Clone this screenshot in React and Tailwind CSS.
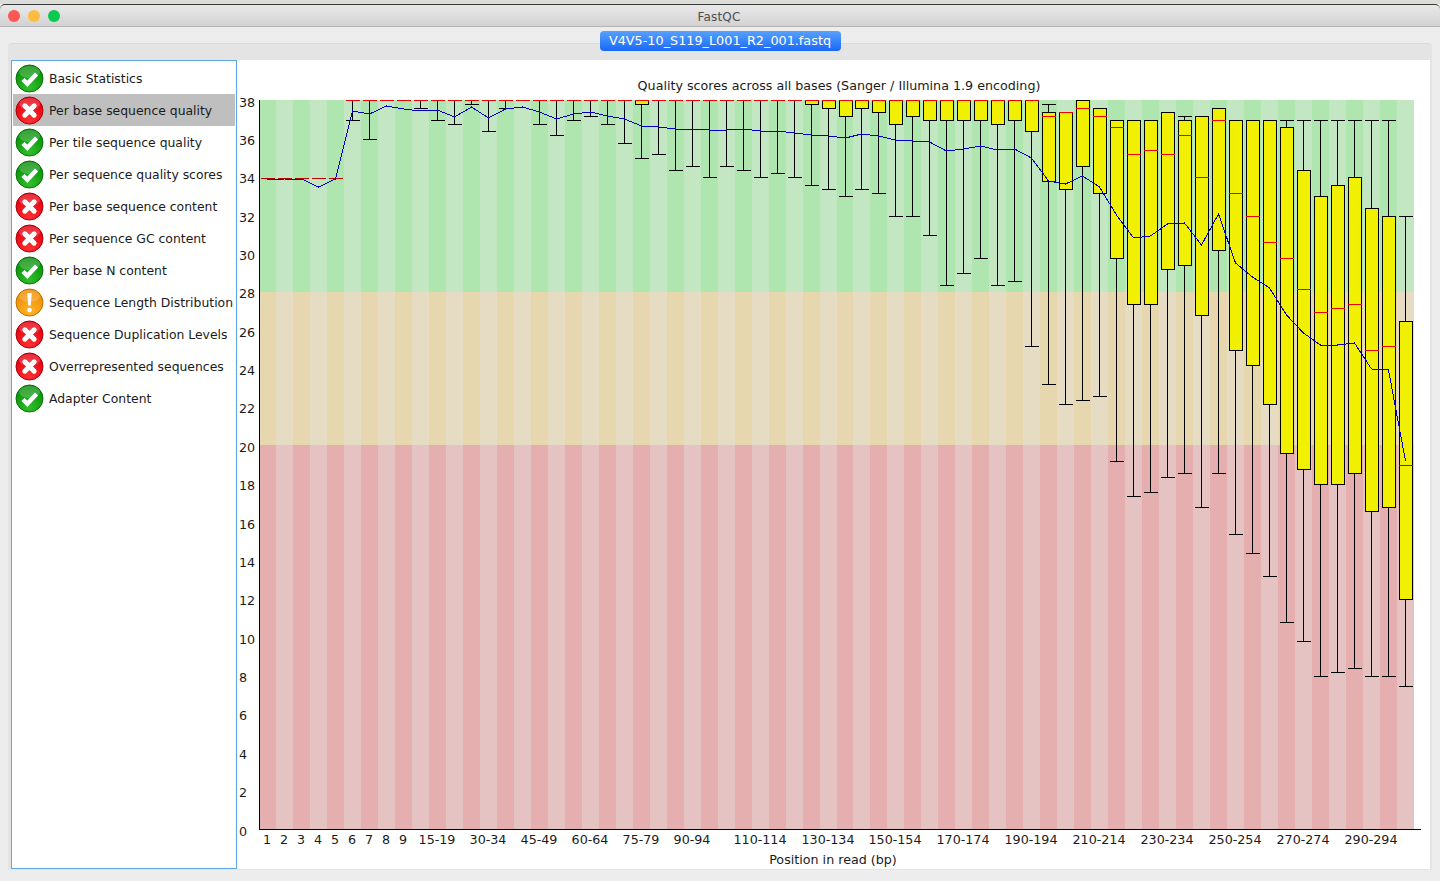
import React from "react";

const modules = [
  { name: "Basic Statistics", status: "ok" },
  { name: "Per base sequence quality", status: "fail", selected: true },
  { name: "Per tile sequence quality", status: "ok" },
  { name: "Per sequence quality scores", status: "ok" },
  { name: "Per base sequence content", status: "fail" },
  { name: "Per sequence GC content", status: "fail" },
  { name: "Per base N content", status: "ok" },
  { name: "Sequence Length Distribution", status: "warn" },
  { name: "Sequence Duplication Levels", status: "fail" },
  { name: "Overrepresented sequences", status: "fail" },
  { name: "Adapter Content", status: "ok" },
];

const PLOT_LEFT = 259;
const PLOT_RIGHT = 1414;
const PLOT_TOP = 100;
const PLOT_BOTTOM = 829;
const COL = (PLOT_RIGHT - PLOT_LEFT) / 68;

// pixel rows for each column: [top whisker, box top, median, box bottom, low whisker]
const flat = (low) => [100, 100, 100, 100, low];
const boxes = [
  [178, 178, 178, 178, 178],
  [178, 178, 178, 178, 178],
  [178, 178, 178, 178, 178],
  [178, 178, 178, 178, 178],
  [178, 178, 178, 178, 178],
  flat(120), flat(139), flat(100), flat(100), flat(108),
  flat(120), flat(124), flat(104), flat(131), flat(108),
  flat(100), flat(124), flat(135), flat(120), flat(116),
  flat(124), flat(143),
  [100, 100, 100, 104, 158],
  flat(154), flat(170), flat(166), flat(177), flat(166), flat(170), flat(177), flat(173), flat(177),
  [100, 100, 100, 104, 185],
  [100, 100, 100, 108, 189],
  [100, 100, 100, 116, 196],
  [100, 100, 100, 108, 189],
  [100, 100, 100, 112, 193],
  [100, 100, 100, 124, 216],
  [100, 100, 100, 116, 216],
  [100, 100, 100, 120, 235],
  [100, 100, 100, 120, 285],
  [100, 100, 100, 120, 273],
  [100, 100, 100, 120, 258],
  [100, 100, 100, 124, 285],
  [100, 100, 100, 120, 281],
  [100, 100, 100, 131, 346],
  [104, 112, 116, 181, 384],
  [112, 112, 112, 189, 404],
  [100, 100, 108, 166, 400],
  [108, 108, 116, 193, 396],
  [120, 120, 127, 258, 461],
  [120, 120, 154, 304, 496],
  [120, 120, 150, 304, 492],
  [112, 112, 154, 269, 477],
  [116, 120, 135, 265, 473],
  [116, 116, 177, 315, 507],
  [108, 108, 120, 250, 473],
  [120, 120, 193, 350, 534],
  [120, 120, 216, 365, 553],
  [120, 120, 242, 404, 576],
  [120, 127, 258, 453, 622],
  [120, 170, 289, 469, 641],
  [120, 196, 312, 484, 676],
  [120, 185, 308, 484, 672],
  [120, 177, 304, 473, 668],
  [120, 208, 350, 511, 676],
  [120, 216, 346, 507, 676],
  [216, 321, 465, 599, 686],
];

const means = [
  180, 179, 179, 187, 179, 111, 114, 106, 109, 111, 110, 117, 107, 118, 109, 107, 112,
  119, 114, 112, 116, 119, 126, 127, 129, 129, 130, 130, 129, 131, 131, 133, 135, 136,
  138, 134, 136, 140, 141, 142, 151, 149, 146, 150, 149, 158, 181, 184, 176, 187, 215,
  238, 236, 224, 223, 245, 214, 263, 277, 288, 315, 333, 345, 345, 343, 369, 370, 461,
];

const xLabels = [
  [0, "1"], [1, "2"], [2, "3"], [3, "4"], [4, "5"], [5, "6"], [6, "7"], [7, "8"], [8, "9"],
  [10, "15-19"], [13, "30-34"], [16, "45-49"], [19, "60-64"], [22, "75-79"], [25, "90-94"],
  [29, "110-114"], [33, "130-134"], [37, "150-154"], [41, "170-174"], [45, "190-194"],
  [49, "210-214"], [53, "230-234"], [57, "250-254"], [61, "270-274"], [65, "290-294"],
];

const colStart = (i) => Math.round(PLOT_LEFT + i * COL);
const valueY = (v) => PLOT_TOP + ((38 - v) * (PLOT_BOTTOM - PLOT_TOP)) / 38;

const bands = [
  { top: 38, bottom: 28, dark: "#afe6af", light: "#c3e6c3" },
  { top: 28, bottom: 20, dark: "#e6d7af", light: "#e6dcc3" },
  { top: 20, bottom: 0, dark: "#e6afaf", light: "#e6c3c3" },
];

const StatusIcon = ({ status }) => {
  const fill = { ok: "url(#okFill)", fail: "url(#failFill)", warn: "url(#warnFill)" }[status];
  const ring = { ok: "#0b6f0b", fail: "#a8000a", warn: "#b87000" }[status];
  return (
    <svg width="29" height="29" viewBox="0 0 29 29" className="shrink-0">
      <circle cx="14.5" cy="14.5" r="13.5" fill={fill} stroke={ring} strokeWidth="1" />
      <ellipse cx="14.5" cy="8" rx="10.5" ry="6" fill="#ffffff" opacity="0.2" />
      {status === "ok" && (
        <path d="M8 15.5 L12.3 19.8 L21.5 10" fill="none" stroke="#ffffff" strokeWidth="4.4" />
      )}
      {status === "fail" && (
        <path d="M9.8 9.8 L19.2 19.2 M19.2 9.8 L9.8 19.2" fill="none" stroke="#ffffff" strokeWidth="5" strokeLinecap="round" />
      )}
      {status === "warn" && (
        <>
          <path d="M12.3 5 H16.7 L15.8 17.5 H13.2 Z" fill="#ffffff" />
          <circle cx="14.5" cy="22" r="2.3" fill="#ffffff" />
        </>
      )}
    </svg>
  );
};

const IconDefs = () => (
  <svg width="0" height="0" className="absolute">
    <defs>
      <radialGradient id="okFill" cx="50%" cy="85%" r="75%">
        <stop offset="0%" stopColor="#2fc02a" />
        <stop offset="100%" stopColor="#0a8f0a" />
      </radialGradient>
      <radialGradient id="failFill" cx="50%" cy="85%" r="75%">
        <stop offset="0%" stopColor="#ff3030" />
        <stop offset="100%" stopColor="#e4000e" />
      </radialGradient>
      <radialGradient id="warnFill" cx="50%" cy="85%" r="75%">
        <stop offset="0%" stopColor="#ffb52e" />
        <stop offset="100%" stopColor="#f08c00" />
      </radialGradient>
    </defs>
  </svg>
);

const QualityChart = () => (
  <svg
    viewBox="237 60 1193 809"
    width="1193"
    height="809"
    className="block shrink-0"
    fontFamily="'DejaVu Sans', sans-serif"
    fontSize="12.7"
    fill="#1a1a1a"
  >
    <text x="839" y="90" textAnchor="middle">
      Quality scores across all bases (Sanger / Illumina 1.9 encoding)
    </text>

    {bands.map((band) =>
      boxes.map((_, i) => (
        <rect
          key={`${band.top}-${i}`}
          x={colStart(i)}
          y={Math.round(valueY(band.top))}
          width={colStart(i + 1) - colStart(i)}
          height={Math.round(valueY(band.bottom)) - Math.round(valueY(band.top))}
          fill={i % 2 === 0 ? band.dark : band.light}
          shapeRendering="crispEdges"
        />
      ))
    )}

    {Array.from({ length: 20 }, (_, i) => i * 2).map((v) => (
      <text key={v} x="239" y={valueY(v) + 6.5}>
        {v}
      </text>
    ))}

    <g shapeRendering="crispEdges">
      {boxes.map(([high, top, med, bottom, low], i) => {
        const left = colStart(i);
        return (
          <g key={i}>
            <rect x={left + 8} y={high} width="1" height={low - high + 1} fill="#000000" />
            <rect x={left + 2} y={high} width="14" height="1" fill="#000000" />
            <rect x={left + 2} y={low} width="14" height="1" fill="#000000" />
            {bottom > top && (
              <>
                <rect x={left + 2} y={top} width="14" height={bottom - top + 1} fill="#000000" />
                <rect x={left + 3} y={top + 1} width="12" height={bottom - top - 1} fill="#f0f000" />
              </>
            )}
            <rect x={left + 2} y={med} width="14" height="1" fill={i < 5 || i === 67 ? "#c00000" : "#f00000"} />
          </g>
        );
      })}
      <polyline
        points={means.map((y, i) => `${colStart(i) + 8.5},${y}`).join(" ")}
        fill="none"
        stroke="#0000c8"
      />
      <rect x="259" y={PLOT_TOP} width="1" height={PLOT_BOTTOM - PLOT_TOP + 1} fill="#000000" />
      <rect x="259" y={PLOT_BOTTOM} width="1162" height="1" fill="#000000" />
    </g>

    {xLabels.map(([i, label]) => (
      <text key={label} x={colStart(i) + 8} y="844" textAnchor="middle">
        {label}
      </text>
    ))}
    <text x="833" y="864" textAnchor="middle">
      Position in read (bp)
    </text>
  </svg>
);

const App = () => {
  return (
    <div className="w-[1440px] h-[881px] overflow-hidden flex flex-col bg-[#ededed] font-['DejaVu_Sans',sans-serif]">
      <IconDefs />
      <div className="h-[4px] bg-[#dcdcd8] shrink-0" />
      <div className="h-[23px] shrink-0 flex items-center relative rounded-t-[5px] border-t border-t-[#3a3a3a] border-b border-b-[#b4b4b4] bg-gradient-to-b from-[#e9e9e9] to-[#d2d2d2]">
        <div className="flex gap-[8px] pl-[8px]">
          <span className="w-[12px] h-[12px] rounded-full bg-[#fc5753]" />
          <span className="w-[12px] h-[12px] rounded-full bg-[#fdbc40]" />
          <span className="w-[12px] h-[12px] rounded-full bg-[#0bc94f]" />
        </div>
        <span className="flex-1 text-center text-[12px] text-[#4d4d4d] pr-[62px] pt-[2px] tracking-[0.2px]">FastQC</span>
      </div>

      <div className="flex flex-col px-[8px] pt-[4px] flex-1 min-h-0">
        <div className="relative z-10 self-center -mb-[8px] h-[20px] w-[241px] flex items-center justify-center rounded-[4px] bg-gradient-to-b from-[#57a0ff] to-[#1668f6] text-white text-[12.8px]">
          V4V5-10_S119_L001_R2_001.fastq
        </div>
        <div className="rounded-t-[4px] bg-[#e4e4e4] border-t border-[#dadada] pt-[16px] pl-[3px] pr-[2px] pb-[1px]">
          <div className="flex bg-white h-[809px]">
            <div className="w-[226px] shrink-0 border border-[#5aa9e6] pt-[1px] px-px">
              {modules.map((mod) => (
                <div
                  key={mod.name}
                  className={`h-[32px] flex items-center gap-[5px] pl-[2px] text-[12.4px] text-[#1a1a1a] whitespace-nowrap ${
                    mod.selected ? "bg-[#bfbfbf]" : ""
                  }`}
                >
                  <StatusIcon status={mod.status} />
                  <span className="pt-[3px]">{mod.name}</span>
                </div>
              ))}
            </div>
            <QualityChart />
          </div>
        </div>
      </div>
    </div>
  );
};

export default App;
